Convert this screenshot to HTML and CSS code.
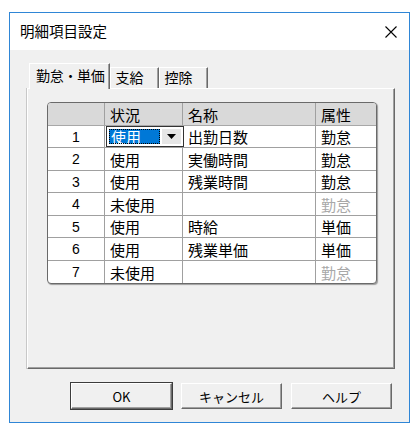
FILE: index.html
```html
<!DOCTYPE html>
<html lang="ja">
<head>
<meta charset="UTF-8">
<title>明細項目設定</title>
<link rel="stylesheet" href="styles.css">
</head>
<body>

<div class="window">
    <div class="titlebar">
        <span class="title">明細項目設定</span>
        <svg class="close" width="12" height="12" viewBox="0 0 12 12">
            <path d="M0.5 0.5 L11.5 11.5 M11.5 0.5 L0.5 11.5" stroke="#000" stroke-width="1.1" fill="none"/>
        </svg>
    </div>

    <div class="content">
        <div class="tabs">
            <div class="tab active">勤怠・単価</div>
            <div class="tab">支給</div>
            <div class="tab">控除</div>
        </div>

        <div class="panel">
            <div class="grid">
                <div class="cell head"></div>
                <div class="cell head">状況</div>
                <div class="cell head">名称</div>
                <div class="cell head">属性</div>

                <div class="cell num">1</div>
                <div class="cell combo-cell">
                    <div class="combo">
                        <span class="combo-value">使用</span>
                        <span class="combo-btn">
                            <svg width="9" height="5" viewBox="0 0 9 5"><path d="M0 0 H9 L4.5 5 Z" fill="#000"/></svg>
                        </span>
                    </div>
                </div>
                <div class="cell">出勤日数</div>
                <div class="cell">勤怠</div>

                <div class="cell num">2</div>
                <div class="cell">使用</div>
                <div class="cell">実働時間</div>
                <div class="cell">勤怠</div>

                <div class="cell num">3</div>
                <div class="cell">使用</div>
                <div class="cell">残業時間</div>
                <div class="cell">勤怠</div>

                <div class="cell num">4</div>
                <div class="cell">未使用</div>
                <div class="cell"></div>
                <div class="cell muted">勤怠</div>

                <div class="cell num">5</div>
                <div class="cell">使用</div>
                <div class="cell">時給</div>
                <div class="cell">単価</div>

                <div class="cell num">6</div>
                <div class="cell">使用</div>
                <div class="cell">残業単価</div>
                <div class="cell">単価</div>

                <div class="cell num last">7</div>
                <div class="cell last">未使用</div>
                <div class="cell last"></div>
                <div class="cell last muted">勤怠</div>
            </div>
        </div>

        <div class="buttons">
            <button class="btn default">OK</button>
            <button class="btn">キャンセル</button>
            <button class="btn">ヘルプ</button>
        </div>
    </div>
</div>

</body>
</html>
```

FILE: styles.css
```css
/* Base */
body {
    margin: 0;
    background-color: #fff;
    font-family: "Noto Sans CJK JP", "Noto Sans", sans-serif;
    color: #000;
}
.window {
    box-sizing: border-box;
    width: 401px;
    height: 411px;
    margin: 12px 0 0 9px;
    border: 1px solid #2f86d6;
    background-color: #f0f0f0;
}
/* Title bar */
.titlebar {
    height: 37px;
    display: flex;
    align-items: center;
    justify-content: space-between;
    padding: 0 12px 0 10px;
    background-color: #fff;
}
.title {
    font-size: 14.5px;
    line-height: 1;
}
/* Tabs */
.content {
    padding: 13px 14px 0 17px;
}
.tabs {
    display: flex;
    align-items: flex-end;
    height: 25px;
    padding-left: 2px;
}
.tab {
    box-sizing: border-box;
    height: 21px;
    padding: 0 14px 0 5px;
    font-size: 14px;
    line-height: 19px;
    border-top: 1px solid #fff;
    border-left: 1px solid #fff;
    border-right: 1px solid #696969;
    box-shadow: inset -1px 0 0 #a0a0a0;
}
.tab.active {
    position: relative;
    height: 26px;
    margin-bottom: -1px;
    padding: 2px 4px 0 6px;
    line-height: 19px;
    letter-spacing: -0.3px;
    background-color: #f0f0f0;
    z-index: 1;
}
/* Panel */
.panel {
    box-sizing: border-box;
    height: 281px;
    padding: 13px 0 0 19px;
    border-top: 1px solid #fff;
    border-left: 1px solid #fff;
    border-right: 1px solid #696969;
    border-bottom: 1px solid #696969;
    box-shadow: inset -1px -1px 0 #a0a0a0, -1px 0 0 #c8c8c8;
}
/* Grid */
.grid {
    display: grid;
    grid-template-columns: 57px 78px 133px 60px;
    grid-template-rows: 23px 22px 23px 22px 23px 22px 23px 22px;
    width: 328px;
    border: 1px solid #6a6a6a;
    border-radius: 4px;
    overflow: hidden;
    background-color: #fff;
    box-shadow: 1px 1px 1px rgba(0, 0, 0, 0.35);
    font-size: 15px;
}
.cell {
    box-sizing: border-box;
    display: flex;
    align-items: center;
    padding-left: 5px;
    border-right: 1px solid #a0a0a0;
    border-bottom: 1px solid #a0a0a0;
    line-height: 1;
    white-space: nowrap;
}
.cell:nth-child(4n) {
    border-right: none;
}
.cell.last {
    border-bottom: none;
}
.cell.head {
    background-color: #d9d9d9;
    border-bottom-color: #a8a8a8;
}
.cell.num {
    justify-content: center;
    padding-left: 0;
    font-family: "Liberation Sans", sans-serif;
    font-size: 14px;
}
.cell.muted {
    color: #a8a8a8;
}
/* Combo box in row 1 */
.combo-cell {
    position: relative;
    overflow: visible;
}
.combo {
    position: absolute;
    left: 1px;
    top: 0;
    box-sizing: border-box;
    width: 78px;
    height: 21px;
    display: flex;
    align-items: center;
    padding: 2px;
    border: 1px solid #333;
    background-color: #fff;
    z-index: 1;
}
.combo-value {
    box-sizing: border-box;
    width: 51px;
    height: 100%;
    padding-left: 2px;
    display: flex;
    align-items: center;
    background-color: #0078d7;
    color: #fff;
    outline: 1px dotted #000;
    outline-offset: -1px;
}
.combo-btn {
    flex: 1;
    height: 100%;
    margin-left: 2px;
    display: flex;
    align-items: center;
    justify-content: center;
    background-color: #e6e6e6;
}
/* Buttons */
.buttons {
    display: flex;
    justify-content: flex-end;
    gap: 9px;
    padding: 14px 3px 0 0;
}
.btn {
    box-sizing: border-box;
    width: 101px;
    height: 26px;
    padding: 0;
    font-family: "Noto Sans CJK JP", sans-serif;
    font-size: 13px;
    color: #000;
    background-color: #f0f0f0;
    border: 1px solid #fff;
    border-right-color: #696969;
    border-bottom-color: #696969;
    box-shadow: inset -1px -1px 0 #a0a0a0;
}
.btn.default {
    outline: 1px solid #3c3c3c;
    outline-offset: 0;
    border-color: #fff #696969 #696969 #fff;
}
```
